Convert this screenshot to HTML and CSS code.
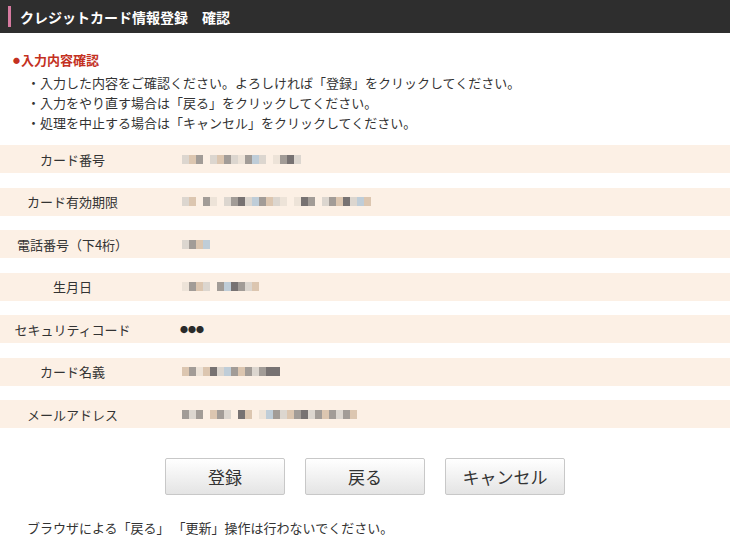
FILE: index.html
```html
<!DOCTYPE html>
<html lang="ja">
<head>
<meta charset="utf-8">
<title>クレジットカード情報登録 確認</title>
<link rel="stylesheet" href="styles.css">
</head>
<body>
<div class="page">
  <header class="title-bar">
    <span class="accent"></span>
    <h1 class="title">クレジットカード情報登録　確認</h1>
  </header>

  <section class="notice">
    <h2 class="notice-head"><span class="mark">●</span>入力内容確認</h2>
    <ul class="notice-list">
      <li>・入力した内容をご確認ください。よろしければ「登録」をクリックしてください。</li>
      <li>・入力をやり直す場合は「戻る」をクリックしてください。</li>
      <li>・処理を中止する場合は「キャンセル」をクリックしてください。</li>
    </ul>
  </section>

  <div class="rows">
    <div class="row">
      <div class="label">カード番号</div>
      <div class="value mosaic"><i class="c1"></i><i class="c3"></i><i class="c2"></i><i class="c0"></i><i class="c1"></i><i class="c3"></i><i class="c2"></i><i class="c1"></i><i class="c6"></i><i class="c2"></i><i class="c4"></i><i class="c1"></i><i class="c0"></i><i class="c6"></i><i class="c2"></i><i class="c5"></i><i class="c1"></i></div>
    </div>
    <div class="row">
      <div class="label">カード有効期限</div>
      <div class="value mosaic"><i class="c1"></i><i class="c3"></i><i class="c0"></i><i class="c2"></i><i class="c6"></i><i class="c0"></i><i class="c1"></i><i class="c2"></i><i class="c5"></i><i class="c1"></i><i class="c4"></i><i class="c2"></i><i class="c3"></i><i class="c1"></i><i class="c6"></i><i class="c0"></i><i class="c6"></i><i class="c5"></i><i class="c2"></i><i class="c0"></i><i class="c1"></i><i class="c2"></i><i class="c3"></i><i class="c5"></i><i class="c1"></i><i class="c4"></i><i class="c3"></i></div>
    </div>
    <div class="row">
      <div class="label">電話番号（下4桁）</div>
      <div class="value mosaic"><i class="c1"></i><i class="c2"></i><i class="c3"></i><i class="c4"></i></div>
    </div>
    <div class="row">
      <div class="label">生月日</div>
      <div class="value mosaic"><i class="c6"></i><i class="c2"></i><i class="c3"></i><i class="c1"></i><i class="c0"></i><i class="c2"></i><i class="c4"></i><i class="c5"></i><i class="c2"></i><i class="c1"></i><i class="c3"></i></div>
    </div>
    <div class="row">
      <div class="label">セキュリティコード</div>
      <div class="value dots">●●●</div>
    </div>
    <div class="row">
      <div class="label">カード名義</div>
      <div class="value mosaic"><i class="c3"></i><i class="c2"></i><i class="c6"></i><i class="c3"></i><i class="c5"></i><i class="c1"></i><i class="c4"></i><i class="c2"></i><i class="c3"></i><i class="c2"></i><i class="c1"></i><i class="c2"></i><i class="c5"></i><i class="c5"></i></div>
    </div>
    <div class="row">
      <div class="label">メールアドレス</div>
      <div class="value mosaic"><i class="c2"></i><i class="c1"></i><i class="c2"></i><i class="c0"></i><i class="c3"></i><i class="c2"></i><i class="c1"></i><i class="c0"></i><i class="c5"></i><i class="c3"></i><i class="c0"></i><i class="c6"></i><i class="c4"></i><i class="c2"></i><i class="c1"></i><i class="c3"></i><i class="c2"></i><i class="c5"></i><i class="c1"></i><i class="c2"></i><i class="c3"></i><i class="c2"></i><i class="c1"></i><i class="c2"></i><i class="c3"></i></div>
    </div>
  </div>

  <div class="actions">
    <button class="btn" type="button">登録</button>
    <button class="btn" type="button">戻る</button>
    <button class="btn" type="button">キャンセル</button>
  </div>

  <p class="footnote">ブラウザによる「戻る」 「更新」操作は行わないでください。</p>
</div>
</body>
</html>
```

FILE: styles.css
```css
html, body {
  margin: 0;
  padding: 0;
  background: #ffffff;
}

body {
  font-family: "Noto Sans CJK JP", "Noto Sans", "DejaVu Sans", sans-serif;
  font-size: 13px;
  color: #333333;
}

.page {
  width: 730px;
}

.title-bar {
  height: 33px;
  background: #2e2e2e;
  display: flex;
  align-items: center;
  padding-left: 8px;
}

.accent {
  width: 3px;
  height: 21px;
  background: #d67aa0;
  margin-right: 9px;
}

.title {
  margin: 0;
  font-size: 14px;
  font-weight: bold;
  color: #ffffff;
  line-height: 20px;
}

.notice {
  padding: 17px 0 0 13px;
}

.notice-head {
  margin: 0;
  font-size: 13px;
  font-weight: bold;
  color: #c4311f;
  line-height: 20px;
}

.mark {
  font-size: 7px;
  vertical-align: 2px;
  margin-right: 1px;
}

.notice-list {
  list-style: none;
  margin: 3px 0 0 0;
  padding: 0 0 0 14px;
}

.notice-list li {
  line-height: 20px;
  font-size: 13px;
  color: #333333;
}

.rows {
  margin-top: 12px;
  display: flex;
  flex-direction: column;
  gap: 14.5px;
}

.row {
  height: 28px;
  background: #fcf0e5;
  display: flex;
  align-items: center;
}

.label {
  width: 145px;
  text-align: center;
  font-size: 13px;
  color: #333333;
}

.value {
  padding-left: 37px;
  display: flex;
  align-items: center;
}

.dots {
  font-size: 8px;
  color: #2a2a2a;
  padding-left: 35px;
}

.mosaic i {
  display: block;
  width: 7px;
  height: 9px;
}

.mosaic .c0 { background: transparent; }
.mosaic .c1 { background: #dcd6cf; }
.mosaic .c2 { background: #a29c97; }
.mosaic .c3 { background: #dcc6b0; }
.mosaic .c4 { background: #bfcdd8; }
.mosaic .c5 { background: #777272; }
.mosaic .c6 { background: #ede3d8; }

.actions {
  margin-top: 30px;
  display: flex;
  justify-content: center;
  gap: 20px;
}

.btn {
  width: 120px;
  height: 37px;
  font-family: "Noto Sans CJK JP", "Noto Sans", sans-serif;
  font-size: 17px;
  color: #333333;
  background: linear-gradient(#ffffff, #e4e4e4);
  border: 1px solid #c8c8c8;
  border-radius: 2px;
  padding: 0;
}

.footnote {
  margin: 23px 0 0 27px;
  font-size: 13px;
  line-height: 20px;
  color: #333333;
}
```
